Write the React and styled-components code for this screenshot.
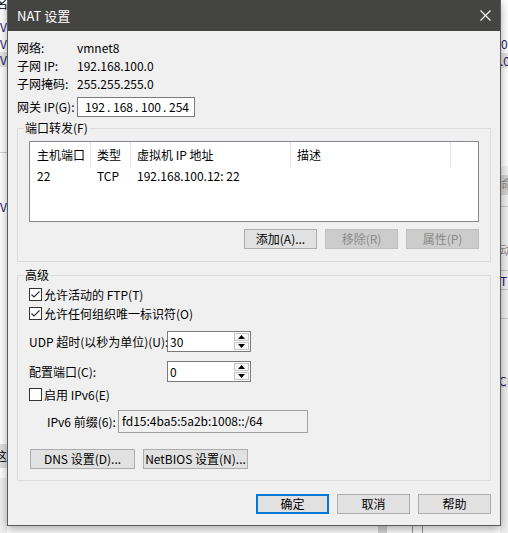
import React from "react";
import styled, { createGlobalStyle } from "styled-components";

const GlobalStyle = createGlobalStyle`
  html, body { margin: 0; padding: 0; }
  body {
    background: #ffffff;
    overflow: hidden;
    font-family: "Noto Sans CJK SC", "Noto Sans", sans-serif;
  }
`;

const FONT = `"Noto Sans CJK SC", "Noto Sans", sans-serif`;

const Desktop = styled.div`
  position: relative;
  width: 508px;
  height: 533px;
  overflow: hidden;
  background: #ffffff;
  font-family: ${FONT};
`;

/* ---- background window fragments (free canvas) ---- */
const BgBand = styled.div`
  position: absolute;
  left: ${(p) => p.$x}px;
  top: ${(p) => p.$y}px;
  width: ${(p) => p.$w}px;
  height: ${(p) => p.$h}px;
  background: ${(p) => p.$bg};
`;

const BgGlyph = styled.span`
  position: absolute;
  left: ${(p) => p.$x}px;
  top: ${(p) => p.$y}px;
  font-size: 12px;
  line-height: 14px;
  color: ${(p) => p.$c || "#1a1a6e"};
  white-space: nowrap;
`;

/* ---- dialog ---- */
const Window = styled.div`
  position: absolute;
  left: 7px;
  top: 0;
  width: 494px;
  height: 526px;
  box-sizing: border-box;
  border: 1px solid #5b5b5b;
  border-top: none;
  background: #f0f0f0;
  box-shadow: 0 3px 9px rgba(0, 0, 0, 0.35);
  display: flex;
  flex-direction: column;
  font-size: 12px;
  color: #000;
`;

const TitleBar = styled.div`
  height: 31px;
  flex: none;
  background: #444442;
  display: flex;
  align-items: center;
  padding: 0 9px;
  color: #ffffff;
  font-size: 13px;
`;

const Title = styled.span`
  line-height: 16px;
`;

const CloseIcon = styled.svg`
  margin-left: auto;
  width: 11px;
  height: 11px;
  margin-right: 0;
`;

const Body = styled.div`
  flex: 1;
  display: flex;
  flex-direction: column;
  padding: 0 9px;
`;

const InfoRow = styled.div`
  display: flex;
  align-items: center;
  height: ${(p) => p.$h}px;
  margin-top: ${(p) => p.$mt || 0}px;
`;

const InfoLabel = styled.span`
  width: 60px;
  flex: none;
  line-height: 16px;
  white-space: nowrap;
`;

const InfoValue = styled.span`
  line-height: 16px;
`;

const IpBox = styled.div`
  width: 118px;
  height: 20px;
  box-sizing: border-box;
  border: 1px solid #7a7a7a;
  background: #ffffff;
  display: flex;
  align-items: center;
  padding-left: 7px;
`;

const IpSeg = styled.span`
  width: ${(p) => (p.$dot ? 6 : 22)}px;
  flex: none;
  line-height: 16px;
`;

const Group = styled.fieldset`
  margin: ${(p) => p.$mt}px 0 0;
  padding: 0 11px ${(p) => p.$pb}px;
  border: 1px solid #dcdcdc;
  min-width: 0;
  display: flex;
  flex-direction: column;
`;

const Legend = styled.legend`
  margin-left: -5px;
  padding: 0 1px;
  font-size: 12px;
  line-height: 14px;
`;

const ListBox = styled.div`
  margin-top: 6px;
  height: 81px;
  box-sizing: border-box;
  border: 1px solid #828790;
  background: #ffffff;
`;

const ListGrid = styled.div`
  display: grid;
  grid-template-columns: 61px 40px 160px 160px;
`;

const HeadCell = styled.div`
  height: 25px;
  line-height: 25px;
  padding-left: ${(p) => (p.$first ? 7 : 6)}px;
  border-right: 1px solid #e5e5e5;
  white-space: nowrap;
`;

const Cell = styled.div`
  height: 18px;
  line-height: 18px;
  padding-left: ${(p) => (p.$first ? 7 : 6)}px;
  white-space: nowrap;
`;

const ButtonRow = styled.div`
  display: flex;
  justify-content: ${(p) => p.$justify || "flex-end"};
  gap: 8px;
  margin-top: ${(p) => p.$mt}px;
  padding-left: ${(p) => p.$pl || 0}px;
`;

const Button = styled.button`
  width: ${(p) => p.$w || 73}px;
  height: 20px;
  box-sizing: border-box;
  margin: 0;
  padding: 0;
  font-family: ${FONT};
  font-size: 12px;
  line-height: 16px;
  white-space: nowrap;
  color: ${(p) => (p.$disabled ? "#8a8a8a" : "#000")};
  background: ${(p) => (p.$disabled ? "#cccccc" : "#e1e1e1")};
  border: ${(p) =>
    p.$default
      ? "2px solid #0078d7"
      : p.$disabled
      ? "1px solid #bfbfbf"
      : "1px solid #adadad"};
`;

const CheckRow = styled.label`
  display: flex;
  align-items: center;
  gap: 2px;
  height: 19px;
  margin-top: ${(p) => p.$mt || 0}px;
  line-height: 16px;
`;

const Box = styled.span`
  width: 13px;
  height: 13px;
  box-sizing: border-box;
  border: 1px solid #333333;
  background: #ffffff;
  display: flex;
  align-items: center;
  justify-content: center;
`;

const FieldRow = styled.div`
  display: flex;
  align-items: center;
  height: ${(p) => p.$h}px;
  margin-top: ${(p) => p.$mt}px;
  padding-left: ${(p) => p.$pl || 0}px;
`;

const FieldLabel = styled.span`
  width: ${(p) => p.$w}px;
  flex: none;
  line-height: 16px;
  white-space: nowrap;
`;

const Spin = styled.div`
  display: flex;
  width: 84px;
  height: 21px;
  box-sizing: border-box;
  border: 1px solid #7a7a7a;
  background: #ffffff;
`;

const SpinValue = styled.span`
  flex: 1;
  padding-left: 2px;
  line-height: 19px;
`;

const SpinArrows = styled.div`
  width: 16px;
  display: flex;
  flex-direction: column;
  gap: 1px;
  padding: 1px 1px 1px 0;
  box-sizing: border-box;
`;

const SpinBtn = styled.div`
  flex: 1;
  border: 1px solid #c7c7c7;
  background: #f7f7f7;
  display: flex;
  align-items: center;
  justify-content: center;
`;

const PrefixBox = styled.div`
  width: 190px;
  height: 23px;
  box-sizing: border-box;
  border: 1px solid #a0a0a0;
  background: #f0f0f0;
  padding-left: 3px;
  line-height: 20px;
`;

const Check = () => (
  <svg width="11" height="11" viewBox="0 0 11 11">
    <polyline
      points="1.5,5.5 4,8 9.5,2.5"
      fill="none"
      stroke="#333"
      strokeWidth="1.2"
    />
  </svg>
);

const Arrow = ({ up }) => (
  <svg width="7" height="4" viewBox="0 0 7 4">
    <polygon points={up ? "3.5,0 7,4 0,4" : "0,0 7,0 3.5,4"} fill="#000" />
  </svg>
);

const Spinner = ({ value }) => (
  <Spin>
    <SpinValue>{value}</SpinValue>
    <SpinArrows>
      <SpinBtn>
        <Arrow up />
      </SpinBtn>
      <SpinBtn>
        <Arrow />
      </SpinBtn>
    </SpinArrows>
  </Spin>
);

const CheckBox = ({ checked, children, mt }) => (
  <CheckRow $mt={mt}>
    <Box>{checked && <Check />}</Box>
    <span>{children}</span>
  </CheckRow>
);

export default function App() {
  return (
    <Desktop>
      <GlobalStyle />
      {/* background window fragments */}
      <BgGlyph $x={-4} $y={-3} $c="#000">名</BgGlyph>
      <BgGlyph $x={0} $y={20}>V</BgGlyph>
      <BgGlyph $x={0} $y={37}>V</BgGlyph>
      <BgBand $x={0} $y={52} $w={7} $h={15} $bg="#e5e5e5" />
      <BgGlyph $x={0} $y={53}>V</BgGlyph>
      <BgGlyph $x={0} $y={200}>V</BgGlyph>
      <BgBand $x={0} $y={152} $w={7} $h={1} $bg="#d0d0d0" />
      <BgBand $x={0} $y={444} $w={7} $h={24} $bg="#e1e1e1" />
      <BgGlyph $x={-5} $y={449} $c="#000">这</BgGlyph>
      <BgBand $x={0} $y={478} $w={7} $h={55} $bg="#f0f0f0" />

      <BgBand $x={500} $y={53} $w={8} $h={15} $bg="#e5e5e5" />
      <BgGlyph $x={501} $y={37}>0</BgGlyph>
      <BgGlyph $x={500} $y={54}>.0</BgGlyph>
      <BgBand $x={500} $y={166} $w={8} $h={367} $bg="#f0f0f0" />
      <BgBand $x={500} $y={175} $w={8} $h={20} $bg="#d4d4d4" />
      <BgGlyph $x={501} $y={177} $c="#888">命</BgGlyph>
      <BgBand $x={500} $y={206} $w={8} $h={1} $bg="#c8c8c8" />
      <BgGlyph $x={500} $y={243} $c="#888">动</BgGlyph>
      <BgBand $x={500} $y={270} $w={8} $h={1} $bg="#c8c8c8" />
      <BgGlyph $x={500} $y={274}>T</BgGlyph>
      <BgBand $x={500} $y={289} $w={8} $h={1} $bg="#c8c8c8" />
      <BgBand $x={500} $y={318} $w={8} $h={1} $bg="#c8c8c8" />
      <BgGlyph $x={499} $y={374}>CR</BgGlyph>
      <BgBand $x={500} $y={386} $w={8} $h={1} $bg="#c8c8c8" />
      <BgBand $x={378} $y={526} $w={9} $h={7} $bg="#d6d6d6" />
      <BgBand $x={412} $y={526} $w={1} $h={7} $bg="#9a9a9a" />
      <BgBand $x={422} $y={526} $w={1} $h={7} $bg="#9a9a9a" />

      <Window>
        <TitleBar>
          <Title>NAT 设置</Title>
          <CloseIcon viewBox="0 0 11 11">
            <path d="M0.5 0.5 L10.5 10.5 M10.5 0.5 L0.5 10.5" stroke="#fff" strokeWidth="1.1" />
          </CloseIcon>
        </TitleBar>
        <Body>
          <InfoRow $h={18} $mt={8}>
            <InfoLabel>网络:</InfoLabel>
            <InfoValue>vmnet8</InfoValue>
          </InfoRow>
          <InfoRow $h={18}>
            <InfoLabel>子网 IP:</InfoLabel>
            <InfoValue>192.168.100.0</InfoValue>
          </InfoRow>
          <InfoRow $h={18}>
            <InfoLabel>子网掩码:</InfoLabel>
            <InfoValue>255.255.255.0</InfoValue>
          </InfoRow>
          <InfoRow $h={20} $mt={4}>
            <InfoLabel>网关 IP(G):</InfoLabel>
            <IpBox>
              <IpSeg>192</IpSeg>
              <IpSeg $dot>.</IpSeg>
              <IpSeg>168</IpSeg>
              <IpSeg $dot>.</IpSeg>
              <IpSeg>100</IpSeg>
              <IpSeg $dot>.</IpSeg>
              <IpSeg>254</IpSeg>
            </IpBox>
          </InfoRow>

          <Group $mt={4} $pb={12}>
            <Legend>端口转发(F)</Legend>
            <ListBox>
              <ListGrid>
                <HeadCell $first>主机端口</HeadCell>
                <HeadCell>类型</HeadCell>
                <HeadCell>虚拟机 IP 地址</HeadCell>
                <HeadCell>描述</HeadCell>
                <Cell $first>22</Cell>
                <Cell>TCP</Cell>
                <Cell>192.168.100.12: 22</Cell>
                <Cell />
              </ListGrid>
            </ListBox>
            <ButtonRow $mt={7}>
              <Button>添加(A)...</Button>
              <Button $disabled>移除(R)</Button>
              <Button $disabled>属性(P)</Button>
            </ButtonRow>
          </Group>

          <Group $mt={6} $pb={11}>
            <Legend>高级</Legend>
            <CheckBox checked mt={3}>
              允许活动的 FTP(T)
            </CheckBox>
            <CheckBox checked>允许任何组织唯一标识符(O)</CheckBox>
            <FieldRow $h={21} $mt={8}>
              <FieldLabel $w={138}>UDP 超时(以秒为单位)(U):</FieldLabel>
              <Spinner value="30" />
            </FieldRow>
            <FieldRow $h={21} $mt={9}>
              <FieldLabel $w={138}>配置端口(C):</FieldLabel>
              <Spinner value="0" />
            </FieldRow>
            <CheckBox mt={3}>启用 IPv6(E)</CheckBox>
            <FieldRow $h={23} $mt={6} $pl={18}>
              <FieldLabel $w={71}>IPv6 前缀(6):</FieldLabel>
              <PrefixBox>fd15:4ba5:5a2b:1008::/64</PrefixBox>
            </FieldRow>
            <ButtonRow $mt={16} $justify="flex-start" $pl={1}>
              <Button $w={105}>DNS 设置(D)...</Button>
              <Button $w={105}>NetBIOS 设置(N)...</Button>
            </ButtonRow>
          </Group>

          <ButtonRow $mt={13}>
            <Button $default>确定</Button>
            <Button>取消</Button>
            <Button>帮助</Button>
          </ButtonRow>
        </Body>
      </Window>
    </Desktop>
  );
}
